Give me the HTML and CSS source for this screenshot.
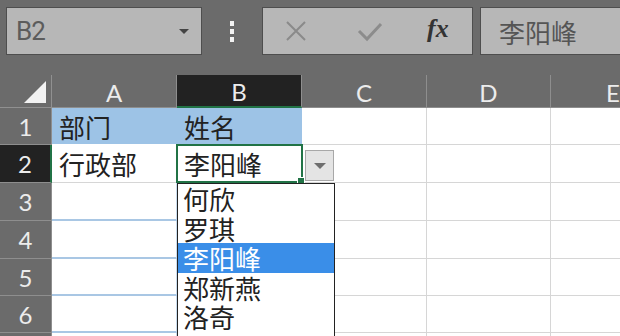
FILE: index.html
```html
<!DOCTYPE html>
<html lang="zh-CN">
<head>
    <meta charset="UTF-8">
    <title>数据验证下拉列表</title>
    <link rel="stylesheet" href="styles.css">
</head>
<body>

<div class="sheet">

    <!-- Formula bar -->
    <div class="toolbar">
        <div class="name-box">
            <span>B2</span>
            <span class="name-arrow"></span>
        </div>
        <div class="dots"><i></i><i></i><i></i></div>
        <div class="fx-buttons">
            <svg class="icon-x" width="22" height="22" viewBox="0 0 22 22">
                <path d="M2 2 L20 20 M20 2 L2 20" stroke="#8a8a8a" stroke-width="2" fill="none"/>
            </svg>
            <svg class="icon-check" width="26" height="20" viewBox="0 0 26 20">
                <path d="M2 9 L10 17 L24 2" stroke="#8c8c8c" stroke-width="3" fill="none"/>
            </svg>
            <span class="fx">fx</span>
        </div>
        <div class="formula-input">李阳峰</div>
    </div>

    <!-- Grid -->
    <div class="grid">
        <div class="corner"><span class="corner-tri"></span></div>
        <div class="col-head">A</div>
        <div class="col-head active">B</div>
        <div class="col-head">C</div>
        <div class="col-head">D</div>
        <div class="col-head">E</div>

        <div class="row-head">1</div>
        <div class="cell title">部门</div>
        <div class="cell title">姓名</div>
        <div class="cell"></div>
        <div class="cell"></div>
        <div class="cell"></div>

        <div class="row-head active">2</div>
        <div class="cell">行政部</div>
        <div class="cell">李阳峰</div>
        <div class="cell"></div>
        <div class="cell"></div>
        <div class="cell"></div>

        <div class="row-head">3</div>
        <div class="cell blue"></div>
        <div class="cell blue"></div>
        <div class="cell"></div>
        <div class="cell"></div>
        <div class="cell"></div>

        <div class="row-head">4</div>
        <div class="cell blue"></div>
        <div class="cell blue"></div>
        <div class="cell"></div>
        <div class="cell"></div>
        <div class="cell"></div>

        <div class="row-head">5</div>
        <div class="cell blue"></div>
        <div class="cell blue"></div>
        <div class="cell"></div>
        <div class="cell"></div>
        <div class="cell"></div>

        <div class="row-head">6</div>
        <div class="cell blue"></div>
        <div class="cell blue"></div>
        <div class="cell"></div>
        <div class="cell"></div>
        <div class="cell"></div>

        <div class="row-head"></div>
        <div class="cell blue"></div>
        <div class="cell blue"></div>
        <div class="cell"></div>
        <div class="cell"></div>
        <div class="cell"></div>

        <!-- selection + validation list sit over the grid -->
        <div class="selection"><span class="handle"></span></div>
        <div class="drop-btn"><span class="drop-tri"></span></div>
        <ul class="drop-list">
            <li>何欣</li>
            <li>罗琪</li>
            <li class="picked">李阳峰</li>
            <li>郑新燕</li>
            <li>洛奇</li>
        </ul>
    </div>

</div>

</body>
</html>
```

FILE: styles.css
```css
body {
    margin: 0;
    background: #6b6b6b;
    font-family: "Noto Sans CJK SC", "Noto Sans", sans-serif;
}
.sheet {
    width: 620px;
    height: 336px;
    overflow: hidden;
    background: #6b6b6b;
}

/* formula bar */
.toolbar {
    display: flex;
    align-items: stretch;
    height: 48px;
    padding: 7px 0 20px 6px;
}
.name-box {
    width: 196px;
    box-sizing: border-box;
    background: #b7b7b7;
    border: 1px solid #4e4e4e;
    display: flex;
    align-items: center;
    justify-content: space-between;
    padding: 0 12px 0 9px;
    font-family: Roboto, "Liberation Sans", sans-serif;
    font-size: 26px;
    letter-spacing: -1px;
    color: #5c5c5c;
}
.name-arrow {
    width: 0;
    height: 0;
    border-left: 5px solid transparent;
    border-right: 5px solid transparent;
    border-top: 5px solid #444;
}
.dots {
    width: 60px;
    display: flex;
    flex-direction: column;
    align-items: center;
    justify-content: center;
    gap: 3px;
}
.dots i {
    width: 4px;
    height: 5px;
    background: #f2f2f2;
}
.fx-buttons {
    width: 211px;
    box-sizing: border-box;
    background: #b7b7b7;
    border: 1px solid #4e4e4e;
    display: flex;
    align-items: center;
    padding-left: 22px;
}
.icon-x {
    margin-right: 50px;
}
.icon-check {
    margin-top: 2px;
    margin-right: 44px;
}
.fx {
    font-family: "Liberation Serif", serif;
    font-style: italic;
    font-weight: bold;
    font-size: 26px;
    color: #333;
    margin-top: -4px;
}
.formula-input {
    flex: 1;
    margin-left: 7px;
    background: #b7b7b7;
    border: 1px solid #4e4e4e;
    border-right: none;
    display: flex;
    align-items: center;
    padding-left: 18px;
    font-size: 26px;
    color: #555;
}

/* grid */
.grid {
    position: relative;
    display: grid;
    grid-template-columns: 52px 125px 125px 125px 124px 125px;
    grid-template-rows: 33px 37px 38px 38px 38px 37px 37px 37px;
    width: 716px;
}
.corner,
.col-head,
.row-head {
    box-sizing: border-box;
    background: #6b6b6b;
    color: #ececec;
    font-family: Lato, "Open Sans", sans-serif;
    font-size: 24px;
    display: flex;
    align-items: center;
    justify-content: center;
}
.corner {
    border-right: 1px solid #909090;
    border-bottom: 1px solid #909090;
    position: relative;
}
.corner-tri {
    position: absolute;
    right: 5px;
    bottom: 4px;
    width: 0;
    height: 0;
    border-left: 22px solid transparent;
    border-bottom: 22px solid #f2f2f2;
}
.col-head {
    border-right: 1px solid #8e8e8e;
    border-bottom: 1px solid #8e8e8e;
    padding-top: 2px;
}
.col-head.active {
    background: #222;
    border-bottom: 2px solid #217346;
}
.row-head {
    border-right: 1px solid #8e8e8e;
    border-bottom: 1px solid #8e8e8e;
}
.row-head.active {
    background: #222;
    border-right: 2px solid #217346;
}
.cell {
    box-sizing: border-box;
    background: #fff;
    border-right: 1px solid #d6d6d6;
    border-bottom: 1px solid #d6d6d6;
    font-size: 26px;
    color: #222;
    padding-left: 7px;
    display: flex;
    align-items: center;
    white-space: nowrap;
}
.cell.title {
    background: #9dc3e6;
    border-right-color: #9dc3e6;
    border-bottom-color: #ffffff;
}
.cell.blue {
    border-bottom: 2px solid #a9c7e4;
    border-right-color: #c9dcee;
}

/* active cell B2 */
.selection {
    position: absolute;
    left: 176px;
    top: 69px;
    width: 127px;
    height: 39px;
    box-sizing: border-box;
    border: 2px solid #217346;
}
.handle {
    position: absolute;
    right: -4px;
    bottom: -4px;
    width: 6px;
    height: 6px;
    background: #217346;
    border: 1px solid #fff;
}
.drop-btn {
    position: absolute;
    left: 305px;
    top: 75px;
    width: 29px;
    height: 31px;
    box-sizing: border-box;
    background: #e4e4e4;
    border: 1px solid #a8a8a8;
    display: flex;
    align-items: center;
    justify-content: center;
}
.drop-tri {
    width: 0;
    height: 0;
    border-left: 6px solid transparent;
    border-right: 6px solid transparent;
    border-top: 6px solid #6e6e6e;
}
.drop-list {
    position: absolute;
    left: 177px;
    top: 108px;
    width: 158px;
    height: 160px;
    box-sizing: border-box;
    margin: 0;
    padding: 0;
    list-style: none;
    background: #fff;
    border: 1px solid #222;
}
.drop-list li {
    height: 29.6px;
    line-height: 29px;
    padding-left: 5px;
    font-size: 26px;
    color: #222;
}
.drop-list li.picked {
    background: #3a8ee8;
    color: #fff;
}
```
